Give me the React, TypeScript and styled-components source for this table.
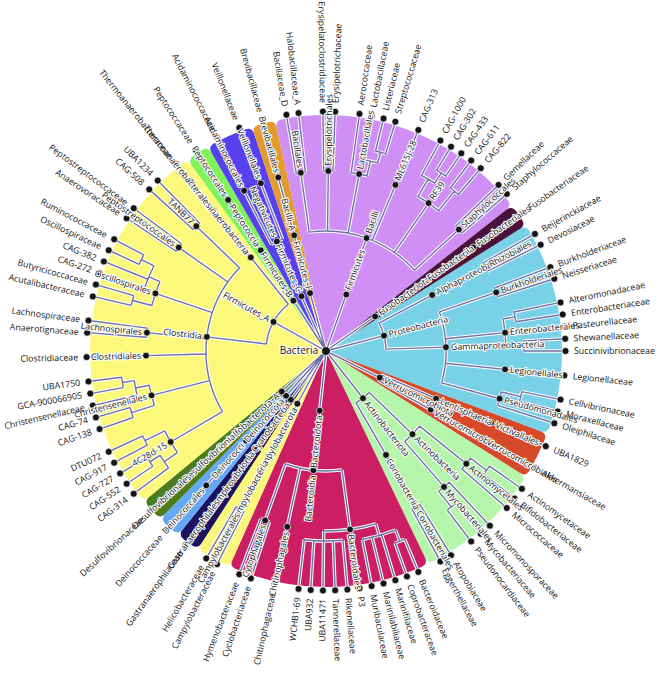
import React from "react";
import styled, { createGlobalStyle } from "styled-components";

const GlobalStyle = createGlobalStyle`
  html, body { margin: 0; padding: 0; background: #ffffff; }
  body { font-family: "Open Sans", "DejaVu Sans", sans-serif; }
`;

const Page = styled.main`
  width: 659px;
  height: 673px;
  overflow: hidden;
  background: #ffffff;
  display: flex;
`;

const Chart = styled.svg`
  display: block;
  width: 659px;
  height: 673px;
  font-family: "Open Sans", "DejaVu Sans", sans-serif;
`;

const Wedge = styled.path<{ $fill: string }>`
  fill: ${(p) => p.$fill};
  stroke: none;
`;

const BranchHalo = styled.path`
  fill: none;
  stroke: #ffffff;
  stroke-width: 3.4;
`;

const BranchLine = styled.path`
  fill: none;
  stroke: #6f71a6;
  stroke-width: 1.4;
`;

const Dot = styled.circle`
  fill: #141414;
  stroke: #ffffff;
  stroke-width: 0.7;
`;

const LeafLabel = styled.text`
  font-size: 8.8px;
  fill: #161616;
`;

const NodeLabel = styled.text`
  font-size: 8.8px;
  fill: #161616;
  stroke: #ffffff;
  stroke-width: 2.2px;
  stroke-linejoin: round;
  paint-order: stroke;
`;

const RootLabel = styled.text`
  font-size: 10px;
  fill: #111111;
  stroke: #ffffff;
  stroke-width: 2px;
  paint-order: stroke;
`;

type TNode = {
  name?: string;
  slot?: number;
  r?: number;
  children?: TNode[];
  theta?: number;
  rad?: number;
};

const CX = 326;
const CY = 351;
const STEP = 360 / 123;
const R_LEAF = 239.5;
const R_WEDGE = 236;

const leaf = (name: string, slot: number): TNode => ({ name, slot });
const node = (name: string | undefined, r: number, children: TNode[]): TNode => ({ name, r, children });
const u = (r: number, children: TNode[]): TNode => ({ r, children });

const pt = (r: number, deg: number): [number, number] => {
  const a = (deg * Math.PI) / 180;
  return [CX + r * Math.cos(a), CY + r * Math.sin(a)];
};
const f = (n: number) => n.toFixed(2);

type Phylum = { color: string; from: number; to: number; tree: TNode };

const phyla: Phylum[] = [
  {
    color: "#78d1e6",
    from: 112,
    to: 130,
    tree: node("Proteobacteria", 60, [
      node("Alphaproteobacteria", 120, [
        node("Rhizobiales", 180, [leaf("Beijerinckiaceae", 113), leaf("Devosiaceae", 114)]),
      ]),
      node("Gammaproteobacteria", 120, [
        node("Burkholderiales", 180, [leaf("Burkholderiaceae", 116), leaf("Neisseriaceae", 117)]),
        node("Enterobacterales", 180, [
          u(192, [leaf("Alteromonadaceae", 119), leaf("Enterobacteriaceae", 120)]),
          leaf("Pasteurellaceae", 121),
          u(198, [leaf("Shewanellaceae", 122), leaf("Succinivibrionaceae", 123)]),
        ]),
        node("Legionellales", 180, [leaf("Legionellaceae", 125)]),
        node("Pseudomonadales", 180, [
          u(200, [leaf("Cellvibrionaceae", 127), leaf("Moraxellaceae", 128)]),
          leaf("Oleiphilaceae", 129),
        ]),
      ]),
    ]),
  },
  {
    color: "#d6492a",
    from: 130,
    to: 134,
    tree: node("Verrucomicrobiota", 60, [
      node("Lentisphaeria", 120, [node("Victivallales", 180, [leaf("UBA1829", 131)])]),
      node("Verrucomicrobiae", 120, [node("Verrucomicrobiales", 180, [leaf("Akkermansiaceae", 133)])]),
    ]),
  },
  {
    color: "#b6f6aa",
    from: 134,
    to: 145,
    tree: node("Actinobacteriota", 60, [
      node("Actinobacteria", 120, [
        node("Actinomycetales", 180, [
          u(200, [leaf("Actinomycetaceae", 135), leaf("Bifidobacteriaceae", 136)]),
          leaf("Micrococcaceae", 137),
        ]),
        node("Mycobacteriales", 180, [
          leaf("Micromonosporaceae", 139),
          u(200, [leaf("Mycobacteriaceae", 140), leaf("Pseudonocardiaceae", 141)]),
        ]),
      ]),
      node("Coriobacteriia", 120, [
        node("Coriobacteriales", 180, [leaf("Atopobiaceae", 143), leaf("Eggerthellaceae", 144)]),
      ]),
    ]),
  },
  {
    color: "#cc1e62",
    from: 22,
    to: 39,
    tree: node("Bacteroidota", 60, [
      node("Bacteroidia", 120, [
        node("Bacteroidales", 180, [
          u(192, [
            u(204, [leaf("Bacteroidaceae", 23), leaf("Coprobacteraceae", 24)]),
            leaf("Marinifilaceae", 25),
            leaf("Marinilabiliaceae", 26),
            leaf("Muribaculaceae", 27),
          ]),
          leaf("P3", 28),
          u(190, [
            leaf("Rikenellaceae", 29),
            leaf("Tannerellaceae", 30),
            leaf("UBA11471", 31),
            leaf("UBA932", 32),
            leaf("WCHB1-69", 33),
          ]),
        ]),
        node("Chitinophagales", 180, [leaf("Chitinophagaceae", 35)]),
        node("Cytophagales", 180, [leaf("Cyclobacteriaceae", 37), leaf("Hymenobacteraceae", 38)]),
      ]),
    ]),
  },
  {
    color: "#f9f77c",
    from: 39,
    to: 42,
    tree: node("Campylobacterota", 60, [
      node("Campylobacteria", 120, [
        node("Campylobacterales", 180, [leaf("Campylobacteraceae", 40), leaf("Helicobacteraceae", 41)]),
      ]),
    ]),
  },
  {
    color: "#1b135e",
    from: 42,
    to: 44,
    tree: node("Cyanobacteria", 60, [
      node("Vampirovibrionia", 120, [node("Gastranaerophilales", 180, [leaf("Gastranaerophilaceae", 43)])]),
    ]),
  },
  {
    color: "#66a7f6",
    from: 44,
    to: 46,
    tree: node("Deinococcota", 60, [
      node("Deinococci", 120, [node("Deinococcales", 180, [leaf("Deinococcaceae", 45)])]),
    ]),
  },
  {
    color: "#4c7c1d",
    from: 46,
    to: 48,
    tree: node("Desulfobacterota_A", 60, [
      node("Desulfovibrionia", 120, [node("Desulfovibrionales", 180, [leaf("Desulfovibrionaceae", 47)])]),
    ]),
  },
  {
    color: "#fbf87c",
    from: 48,
    to: 80,
    tree: node("Firmicutes_A", 60, [
      node("Clostridia", 120, [
        node("4C28d-15", 180, [
          u(196, [leaf("CAG-314", 49), u(208, [leaf("CAG-552", 50), leaf("CAG-727", 51)])]),
          u(202, [leaf("CAG-917", 52), leaf("DTU072", 53)]),
        ]),
        node("Christensenellales", 180, [
          u(204, [leaf("CAG-138", 55), leaf("CAG-74", 56)]),
          u(194, [
            leaf("Christensenellaceae", 57),
            u(206, [leaf("GCA-900066905", 58), leaf("UBA1750", 59)]),
          ]),
        ]),
        node("Clostridiales", 180, [leaf("Clostridiaceae", 61)]),
        node("Lachnospirales", 180, [leaf("Anaerotignaceae", 63), leaf("Lachnospiraceae", 64)]),
        node("Oscillospirales", 180, [
          u(200, [leaf("Acutalibacteraceae", 66), leaf("Butyricicoccaceae", 67)]),
          u(192, [
            leaf("CAG-272", 68),
            leaf("CAG-382", 69),
            u(206, [leaf("Oscillospiraceae", 70), leaf("Ruminococcaceae", 71)]),
          ]),
        ]),
        node("Peptostreptococcales", 180, [
          leaf("Anaerovoracaceae", 73),
          leaf("Peptostreptococcaceae", 74),
        ]),
        node("TANB77", 180, [leaf("CAG-508", 76), leaf("UBA1234", 77)]),
      ]),
      node("Thermoanaerobacteria", 120, [
        node("Thermoanaerobacterales", 180, [leaf("Thermoanaerobacteraceae", 79)]),
      ]),
    ]),
  },
  {
    color: "#7ef35c",
    from: 80,
    to: 82,
    tree: node("Firmicutes_B", 60, [
      node("Peptococcia", 120, [node("Peptococcales", 180, [leaf("Peptococcaceae", 81)])]),
    ]),
  },
  {
    color: "#5741ee",
    from: 82,
    to: 86,
    tree: node("Firmicutes_C", 60, [
      node("Negativicutes", 120, [
        node("Acidaminococcales", 180, [leaf("Acidaminococcaceae", 83)]),
        node("Veillonellales", 180, [leaf("Veillonellaceae", 85)]),
      ]),
    ]),
  },
  {
    color: "#e39b2f",
    from: 86,
    to: 88,
    tree: node("Firmicutes_I", 60, [
      node("Bacilli_A", 120, [node("Brevibacillales", 180, [leaf("Brevibacillaceae", 87)])]),
    ]),
  },
  {
    color: "#cf8ff5",
    from: 88,
    to: 110,
    tree: node("Firmicutes", 60, [
      node("Bacilli", 120, [
        node("Bacillales", 180, [leaf("Bacillaceae_D", 89), leaf("Halobacillaceae_A", 90)]),
        node("Erysipelotrichales", 180, [
          leaf("Erysipelatoclostridiaceae", 92),
          leaf("Erysipelotrichaceae", 93),
        ]),
        node("Lactobacillales", 180, [
          leaf("Aerococcaceae", 95),
          u(195, [leaf("Lactobacillaceae", 96), u(206, [leaf("Listeriaceae", 97), leaf("Streptococcaceae", 98)])]),
        ]),
        node("ML615J-28", 180, [leaf("CAG-313", 100)]),
        node("RF39", 180, [
          u(200, [leaf("CAG-1000", 102), u(212, [leaf("CAG-302", 103), leaf("CAG-433", 104)])]),
          u(205, [leaf("CAG-611", 105), leaf("CAG-822", 106)]),
        ]),
        node("Staphylococcales", 180, [leaf("Gemellaceae", 108), leaf("Staphylococcaceae", 109)]),
      ]),
    ]),
  },
  {
    color: "#4a1239",
    from: 110,
    to: 112,
    tree: node("Fusobacteriota", 60, [
      node("Fusobacteriia", 120, [node("Fusobacteriales", 180, [leaf("Fusobacteriaceae", 111)])]),
    ]),
  },
];

function layout(n: TNode): void {
  if (n.children && n.children.length) {
    n.children.forEach(layout);
    n.rad = n.r ?? 0;
    const first = n.children[0].theta ?? 0;
    const last = n.children[n.children.length - 1].theta ?? 0;
    n.theta = (first + last) / 2;
  } else {
    n.rad = R_LEAF;
    n.theta = (n.slot ?? 0) * STEP;
  }
}

function collectBranches(n: TNode, acc: string[]): void {
  if (!n.children) return;
  const r = n.rad ?? 0;
  const kids = n.children;
  if (kids.length > 1) {
    const a0 = kids[0].theta ?? 0;
    const a1 = kids[kids.length - 1].theta ?? 0;
    const [x0, y0] = pt(r, a0);
    const [x1, y1] = pt(r, a1);
    acc.push(`M${f(x0)} ${f(y0)} A${r} ${r} 0 0 1 ${f(x1)} ${f(y1)}`);
  }
  kids.forEach((k) => {
    const [x0, y0] = pt(r, k.theta ?? 0);
    const [x1, y1] = pt(k.rad ?? 0, k.theta ?? 0);
    acc.push(`M${f(x0)} ${f(y0)} L${f(x1)} ${f(y1)}`);
    collectBranches(k, acc);
  });
}

type Mark = { name: string; theta: number; rad: number; leaf: boolean };

function collectMarks(n: TNode, acc: Mark[]): void {
  const isLeaf = !n.children;
  if (n.name) acc.push({ name: n.name, theta: n.theta ?? 0, rad: n.rad ?? 0, leaf: isLeaf });
  n.children?.forEach((k) => collectMarks(k, acc));
}

function wedgePath(s0: number, s1: number): string {
  const a0 = s0 * STEP;
  const a1 = s1 * STEP;
  const cr = 7;
  const d = ((cr / R_WEDGE) * 180) / Math.PI;
  const [p0x, p0y] = pt(R_WEDGE - cr, a0);
  const [c0x, c0y] = pt(R_WEDGE, a0);
  const [p1x, p1y] = pt(R_WEDGE, a0 + d);
  const [p2x, p2y] = pt(R_WEDGE, a1 - d);
  const [c1x, c1y] = pt(R_WEDGE, a1);
  const [p3x, p3y] = pt(R_WEDGE - cr, a1);
  return `M${CX} ${CY} L${f(p0x)} ${f(p0y)} Q${f(c0x)} ${f(c0y)} ${f(p1x)} ${f(p1y)} A${R_WEDGE} ${R_WEDGE} 0 0 1 ${f(p2x)} ${f(p2y)} Q${f(c1x)} ${f(c1y)} ${f(p3x)} ${f(p3y)} Z`;
}

phyla.forEach((p) => layout(p.tree));

const branchParts: string[] = [];
phyla.forEach((p) => {
  const [x, y] = pt(p.tree.rad ?? 0, p.tree.theta ?? 0);
  branchParts.push(`M${CX} ${CY} L${f(x)} ${f(y)}`);
  collectBranches(p.tree, branchParts);
});
const branchD = branchParts.join(" ");

const marks: Mark[] = [];
phyla.forEach((p) => collectMarks(p.tree, marks));

function labelProps(m: Mark, offset: number) {
  const a = (((m.theta % 360) + 360) % 360);
  const flip = a > 90 && a < 270;
  const [x, y] = pt(m.rad + offset, m.theta);
  const rot = flip ? a + 180 : a;
  return {
    transform: `translate(${f(x)} ${f(y)}) rotate(${f(rot)})`,
    textAnchor: flip ? "end" : "start",
  } as const;
}

export default function App() {
  return (
    <Page>
      <GlobalStyle />
      <Chart viewBox="0 0 659 673" xmlns="http://www.w3.org/2000/svg">
        <g>
          {phyla.map((p) => (
            <Wedge key={p.tree.name} $fill={p.color} d={wedgePath(p.from, p.to)} />
          ))}
        </g>
        <BranchHalo d={branchD} />
        <BranchLine d={branchD} />
        <g>
          {marks.map((m) => {
            const [x, y] = pt(m.rad, m.theta);
            return <Dot key={`d-${m.name}`} cx={f(x)} cy={f(y)} r={m.leaf ? 3.5 : 3.4} />;
          })}
          <Dot cx={CX} cy={CY} r={4.4} />
        </g>
        <g>
          {marks.map((m) => {
            const lp = labelProps(m, m.leaf ? 8.5 : 5);
            return m.leaf ? (
              <LeafLabel key={`l-${m.name}`} transform={lp.transform} textAnchor={lp.textAnchor} dy="0.34em">
                {m.name}
              </LeafLabel>
            ) : (
              <NodeLabel key={`l-${m.name}`} transform={lp.transform} textAnchor={lp.textAnchor} dy="0.34em">
                {m.name}
              </NodeLabel>
            );
          })}
          <RootLabel x={CX - 8} y={CY} textAnchor="end" dy="0.34em">
            Bacteria
          </RootLabel>
        </g>
      </Chart>
    </Page>
  );
}
